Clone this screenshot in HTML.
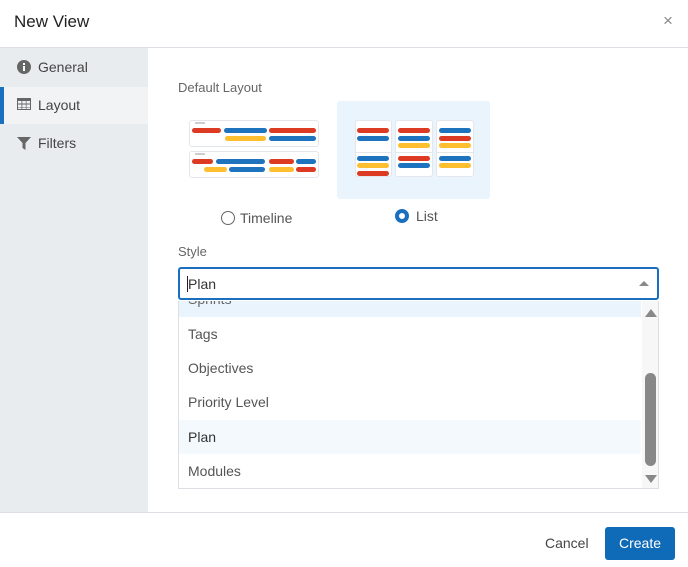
<!DOCTYPE html>
<html><head><style>
*{margin:0;padding:0;box-sizing:border-box}
body{width:688px;height:567px;position:relative;background:#fff;font-family:"Liberation Sans",sans-serif;color:#333;overflow:hidden}
.a{position:absolute}
.bar{position:absolute;height:5px;border-radius:3px}
.r{background:#dc3a22}.b{background:#1e73be}.y{background:#fdbe2f}
.card{position:absolute;background:#fff;border:1px solid #e3e6ea;border-radius:3px}
.item{position:absolute;left:188px;font-size:14px;color:#555}
</style></head><body>
<div class="a" style="left:14px;top:12px;font-size:17px;color:#222">New View</div>
<div class="a" style="left:663px;top:11px;font-size:17px;color:#888">×</div>
<div class="a" style="left:0;top:47px;width:688px;height:1px;background:#dcdfe3"></div>
<div class="a" style="left:0;top:48px;width:148px;height:464px;background:#e9ecef"></div>
<div class="a" style="left:0;top:87px;width:148px;height:37px;background:#f1f3f5"></div>
<div class="a" style="left:0;top:87px;width:4px;height:37px;background:#1a6fbf"></div>
<svg class="a" style="left:17px;top:60px" width="14" height="14"><circle cx="7" cy="7" r="7" fill="#666"/><rect x="6" y="6" width="2" height="5" fill="#fff"/><rect x="6" y="3" width="2" height="2" fill="#fff"/></svg>
<div class="a" style="left:38px;top:59px;font-size:14px;color:#444">General</div>
<svg class="a" style="left:17px;top:98px" width="14" height="12"><rect width="14" height="12" fill="#666"/><g fill="#f1f3f5"><rect x="1" y="3" width="3.5" height="2.5"/><rect x="5.3" y="3" width="3.5" height="2.5"/><rect x="9.5" y="3" width="3.5" height="2.5"/><rect x="1" y="6.5" width="3.5" height="2.5"/><rect x="5.3" y="6.5" width="3.5" height="2.5"/><rect x="9.5" y="6.5" width="3.5" height="2.5"/><rect x="1" y="9.5" width="3.5" height="1.5"/><rect x="5.3" y="9.5" width="3.5" height="1.5"/><rect x="9.5" y="9.5" width="3.5" height="1.5"/></g></svg>
<div class="a" style="left:38px;top:97px;font-size:14px;color:#444">Layout</div>
<svg class="a" style="left:17px;top:137px" width="14" height="13"><path d="M0 0H14L8.5 6V13L5.5 11V6Z" fill="#666"/></svg>
<div class="a" style="left:38px;top:135px;font-size:14px;color:#444">Filters</div>

<div class="a" style="left:178px;top:80px;font-size:13px;color:#666">Default Layout</div>
<div class="card" style="left:189px;top:120px;width:130px;height:27px"></div>
<div class="a" style="left:195px;top:122px;width:10px;height:2px;background:#ccc"></div>
<div class="bar r" style="left:192px;top:128px;width:29px"></div>
<div class="bar b" style="left:224px;top:128px;width:43px"></div>
<div class="bar r" style="left:269px;top:128px;width:47px"></div>
<div class="bar y" style="left:225px;top:136px;width:41px"></div>
<div class="bar b" style="left:269px;top:136px;width:47px"></div>
<div class="card" style="left:189px;top:151px;width:130px;height:27px"></div>
<div class="a" style="left:195px;top:153px;width:10px;height:2px;background:#ccc"></div>
<div class="bar r" style="left:192px;top:159px;width:21px"></div>
<div class="bar b" style="left:216px;top:159px;width:49px"></div>
<div class="bar r" style="left:269px;top:159px;width:25px"></div>
<div class="bar b" style="left:296px;top:159px;width:20px"></div>
<div class="bar y" style="left:204px;top:167px;width:23px"></div>
<div class="bar b" style="left:229px;top:167px;width:36px"></div>
<div class="bar y" style="left:269px;top:167px;width:25px"></div>
<div class="bar r" style="left:296px;top:167px;width:20px"></div>
<div class="a" style="left:337px;top:101px;width:153px;height:98px;background:#eaf4fd;border-radius:3px"></div>
<div class="card" style="left:355px;top:120px;width:37px;height:57px"></div>
<div class="card" style="left:395px;top:120px;width:38px;height:57px"></div>
<div class="card" style="left:436px;top:120px;width:38px;height:57px"></div>
<div class="a" style="left:355px;top:152px;width:37px;height:1px;background:#e3e6ea"></div>
<div class="a" style="left:395px;top:152px;width:38px;height:1px;background:#e3e6ea"></div>
<div class="a" style="left:436px;top:152px;width:38px;height:1px;background:#e3e6ea"></div>
<div class="bar r" style="left:357px;top:128px;width:32px"></div>
<div class="bar b" style="left:357px;top:136px;width:32px"></div>
<div class="bar b" style="left:357px;top:156px;width:32px"></div>
<div class="bar y" style="left:357px;top:163px;width:32px"></div>
<div class="bar r" style="left:357px;top:171px;width:32px"></div>
<div class="bar r" style="left:398px;top:128px;width:32px"></div>
<div class="bar b" style="left:398px;top:136px;width:32px"></div>
<div class="bar y" style="left:398px;top:143px;width:32px"></div>
<div class="bar r" style="left:398px;top:156px;width:32px"></div>
<div class="bar b" style="left:398px;top:163px;width:32px"></div>
<div class="bar b" style="left:439px;top:128px;width:32px"></div>
<div class="bar r" style="left:439px;top:136px;width:32px"></div>
<div class="bar y" style="left:439px;top:143px;width:32px"></div>
<div class="bar b" style="left:439px;top:156px;width:32px"></div>
<div class="bar y" style="left:439px;top:163px;width:32px"></div>
<div class="a" style="left:221px;top:211px;width:14px;height:14px;border:1.5px solid #666;border-radius:50%"></div>
<div class="a" style="left:240px;top:210px;font-size:14px;color:#555">Timeline</div>
<div class="a" style="left:395px;top:209px;width:14px;height:14px;border:4px solid #1a6fbf;border-radius:50%"></div>
<div class="a" style="left:416px;top:208px;font-size:14px;color:#555">List</div>

<div class="a" style="left:178px;top:244px;font-size:13px;color:#666">Style</div>
<div class="a" style="left:178px;top:267px;width:481px;height:33px;border:2px solid #1a6fbf;border-radius:3px"></div>
<div class="a" style="left:187px;top:276px;width:1px;height:16px;background:#222"></div>
<div class="a" style="left:188px;top:276px;font-size:14px;color:#333">Plan</div>
<div class="a" style="left:639px;top:281px;width:0;height:0;border-left:5px solid transparent;border-right:5px solid transparent;border-bottom:5px solid #888"></div>

<div class="a" style="left:178px;top:301px;width:481px;height:188px;border:1px solid #dcdfe3;border-top:none;overflow:hidden">
<div class="a" style="left:0;top:0;width:462px;height:16px;background:#eaf4fd"></div>
<div class="a" style="left:9px;top:-10px;font-size:14px;color:#666">Sprints</div>
<div class="a" style="left:0;top:119px;width:462px;height:34px;background:#f4f9fe"></div>
<div class="a" style="left:463px;top:0;width:17px;height:188px;background:#f7f7f7"></div>
<div class="a" style="left:466px;top:8px;width:0;height:0;border-left:6px solid transparent;border-right:6px solid transparent;border-bottom:8px solid #888"></div>
<div class="a" style="left:466px;top:72px;width:11px;height:93px;background:#888;border-radius:6px"></div>
<div class="a" style="left:466px;top:174px;width:0;height:0;border-left:6px solid transparent;border-right:6px solid transparent;border-top:8px solid #888"></div>
</div>
<div class="item" style="top:326px">Tags</div>
<div class="item" style="top:360px">Objectives</div>
<div class="item" style="top:394px">Priority Level</div>
<div class="item" style="top:429px;color:#333">Plan</div>
<div class="item" style="top:463px">Modules</div>

<div class="a" style="left:0;top:512px;width:688px;height:1px;background:#dcdfe3"></div>
<div class="a" style="left:545px;top:535px;font-size:14px;color:#444">Cancel</div>
<div class="a" style="left:605px;top:527px;width:70px;height:33px;background:#0f6ab8;border-radius:3px;color:#fff;font-size:14px;text-align:center;line-height:33px">Create</div>
</body></html>
